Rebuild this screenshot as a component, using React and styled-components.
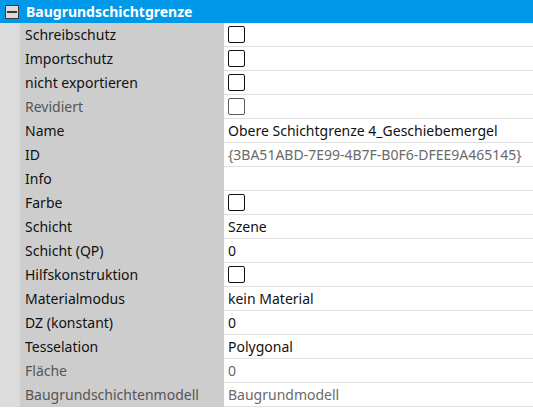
import React from 'react';
import styled, { createGlobalStyle } from 'styled-components';

const rows = [
  { label: 'Schreibschutz', check: true },
  { label: 'Importschutz', check: true },
  { label: 'nicht exportieren', check: true },
  { label: 'Revidiert', check: true, disabled: true },
  { label: 'Name', value: 'Obere Schichtgrenze 4_Geschiebemergel' },
  { label: 'ID', value: '{3BA51ABD-7E99-4B7F-B0F6-DFEE9A465145}', readOnly: true },
  { label: 'Info', value: '' },
  { label: 'Farbe', check: true },
  { label: 'Schicht', value: 'Szene' },
  { label: 'Schicht (QP)', value: '0' },
  { label: 'Hilfskonstruktion', check: true },
  { label: 'Materialmodus', value: 'kein Material' },
  { label: 'DZ (konstant)', value: '0' },
  { label: 'Tesselation', value: 'Polygonal' },
  { label: 'Fläche', value: '0', disabled: true, readOnly: true },
  { label: 'Baugrundschichtenmodell', value: 'Baugrundmodell', disabled: true, readOnly: true },
];

function App() {
  return (
    <>
      <GlobalStyle />
      <Grid>
        <Header>
          <Toggle />
          <Title>Baugrundschichtgrenze</Title>
        </Header>
        {rows.map((row) => (
          <Row key={row.label}>
            <Margin />
            <Label disabled={row.disabled}>{row.label}</Label>
            <Value readOnly={row.readOnly}>
              {row.check ? <CheckBox disabled={row.disabled} /> : row.value}
            </Value>
          </Row>
        ))}
      </Grid>
    </>
  );
}

const GlobalStyle = createGlobalStyle`
  body {
    margin: 0;
    background: #fff;
    font-family: "Noto Sans", "Open Sans", sans-serif;
  }
`;

const Grid = styled.div`
  width: 533px;
  display: flex;
  flex-direction: column;
`;

const Header = styled.div`
  height: 23px;
  background: #0099e9;
  display: flex;
  align-items: center;
  padding-left: 5px;
`;

const Toggle = styled.div`
  width: 14px;
  height: 14px;
  box-sizing: border-box;
  border: 1px solid #3a3a3a;
  background: #dcdcdc;
  display: flex;
  align-items: center;
  justify-content: center;

  &::after {
    content: '';
    width: 10px;
    height: 2px;
    background: #3a3a3a;
  }
`;

const Title = styled.span`
  margin-left: 7px;
  color: #fff;
  font-weight: bold;
  font-size: 14px;
`;

const Row = styled.div`
  display: flex;
  height: 24px;
`;

const Margin = styled.div`
  width: 20px;
  background: #dcdcdc;
`;

const Label = styled.div`
  width: 199px;
  background: #cdcdcd;
  padding-left: 5px;
  display: flex;
  align-items: center;
  font-size: 14px;
  color: ${(p) => (p.disabled ? '#555' : '#111')};
  padding-bottom: 1px;
`;

const Value = styled.div`
  flex: 1;
  box-sizing: border-box;
  border-bottom: 1px solid #e0e0e0;
  padding-left: 4px;
  display: flex;
  align-items: center;
  font-size: 14px;
  color: ${(p) => (p.readOnly ? '#6a6a6a' : '#111')};
  white-space: nowrap;
`;

const CheckBox = styled.div`
  width: 17px;
  height: 17px;
  box-sizing: border-box;
  border: 1.5px solid ${(p) => (p.disabled ? '#5a5a5a' : '#111')};
  border-radius: 2px;
  background: #fff;
`;

export default App;
